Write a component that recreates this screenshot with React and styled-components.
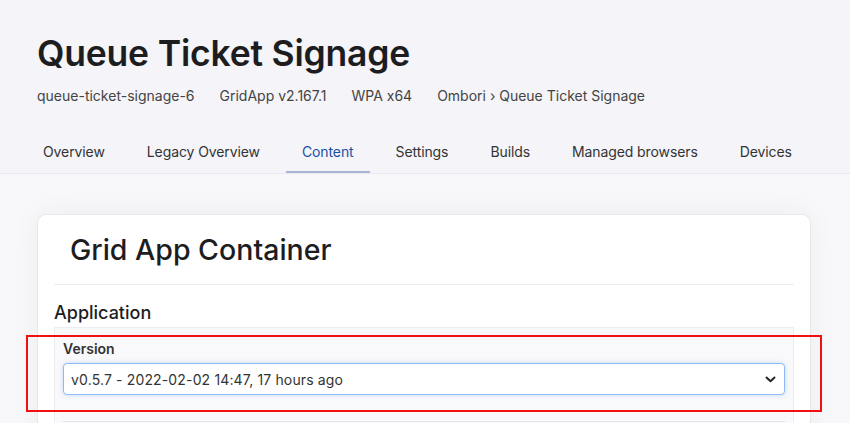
import React from 'react';
import styled, { createGlobalStyle } from 'styled-components';

const GlobalStyle = createGlobalStyle`
  html, body {
    margin: 0;
    padding: 0;
    background: #f8f8fa;
    font-family: "Inter", "Noto Sans", sans-serif;
    color: #222;
  }
  * { box-sizing: border-box; }
`;

const tabs = [
  'Overview',
  'Legacy Overview',
  'Content',
  'Settings',
  'Builds',
  'Managed browsers',
  'Devices',
];

const meta = [
  'queue-ticket-signage-6',
  'GridApp v2.167.1',
  'WPA x64',
  'Ombori \u203a Queue Ticket Signage',
];

const App = () => {
  return (
    <Page>
      <GlobalStyle />
      <Header>
        <Title>Queue Ticket Signage</Title>
        <Meta>
          {meta.map((m) => (
            <MetaItem key={m}>{m}</MetaItem>
          ))}
        </Meta>
        <Tabs>
          {tabs.map((t) => (
            <Tab key={t} $active={t === 'Content'}>
              {t}
            </Tab>
          ))}
        </Tabs>
      </Header>
      <Main>
        <Card>
          <CardHeader>
            <CardTitle>Grid App Container</CardTitle>
          </CardHeader>
          <Section>
            <SectionTitle>Application</SectionTitle>
            <Panel>
              <Field>
                <Highlight />
                <Label>Version</Label>
                <Select>
                  <span>v0.5.7 - 2022-02-02 14:47, 17 hours ago</span>
                  <svg width="11" height="7" viewBox="0 0 11 7" fill="none">
                    <path
                      d="M1.5 1.5 L5.5 5.3 L9.5 1.5"
                      stroke="#222"
                      strokeWidth="1.9"
                      strokeLinecap="round"
                      strokeLinejoin="round"
                    />
                  </svg>
                </Select>
              </Field>
              <Rule />
            </Panel>
          </Section>
        </Card>
      </Main>
    </Page>
  );
};

const Page = styled.div`
  min-height: 100vh;
  overflow: hidden;
`;

const Header = styled.header`
  background: #f4f4f9;
  border-bottom: 1px solid #e9e9ef;
  padding: 0 37px;
`;

const Title = styled.h1`
  margin: 0;
  padding-top: 33px;
  font-size: 35.5px;
  line-height: 42px;
  font-weight: 600;
  color: #1d1d1f;
  letter-spacing: -0.2px;
`;

const Meta = styled.div`
  display: flex;
  gap: 25px;
  margin-top: 11px;
  font-size: 14px;
  line-height: 20px;
  color: #444;
`;

const MetaItem = styled.span`
  white-space: nowrap;
`;

const Tabs = styled.nav`
  display: flex;
  gap: 10px;
  margin: 27px 0 0 -10px;
`;

const Tab = styled.div`
  flex-shrink: 0;
  white-space: nowrap;
  padding: 0 16px;
  height: 40px;
  line-height: 38px;
  font-size: 14px;
  letter-spacing: -0.1px;
  color: ${(p) => (p.$active ? '#1b4fa6' : '#333')};
  border-bottom: 2px solid ${(p) => (p.$active ? '#a9b7d4' : 'transparent')};
`;

const Main = styled.main`
  padding: 40px 39px 0 37px;
`;

const Card = styled.section`
  background: #fff;
  border: 1px solid #e7e7ec;
  border-radius: 9px;
  box-shadow: 0 0 28px rgba(40, 40, 80, 0.05);
  padding: 0 16px;
`;

const CardHeader = styled.div`
  padding: 17px 16px 16px;
  border-bottom: 1px solid #ececf1;
`;

const CardTitle = styled.h2`
  margin: 0;
  font-size: 28.5px;
  line-height: 36px;
  font-weight: 500;
  color: #1d1d1f;
`;

const Section = styled.div`
  padding-top: 16px;
`;

const SectionTitle = styled.h3`
  margin: 0 0 2px;
  font-size: 18px;
  line-height: 24px;
  font-weight: 500;
  color: #1d1d1f;
`;

const Panel = styled.div`
  background: #f9f9fb;
  border: 1px solid #ececf1;
  border-bottom: none;
  padding: 11px 8px 30px;
`;

const Field = styled.div`
  position: relative;
`;

const Highlight = styled.div`
  position: absolute;
  left: -37px;
  right: -37px;
  top: -4px;
  bottom: -17px;
  border: 2px solid #f01010;
  pointer-events: none;
`;

const Label = styled.div`
  font-size: 14px;
  line-height: 20px;
  font-weight: 600;
  color: #333;
  margin-bottom: 4px;
`;

const Select = styled.div`
  display: flex;
  align-items: center;
  justify-content: space-between;
  height: 32px;
  padding: 0 8px 0 7px;
  background: #fff;
  border: 1px solid #8cbaf4;
  border-radius: 4px;
  box-shadow: 0 0 5px rgba(90, 150, 240, 0.3);
  font-size: 14px;
  letter-spacing: 0.15px;
  color: #333;
`;

const Rule = styled.div`
  margin-top: 26px;
  border-top: 1px solid #e4e4ea;
`;

export default App;
